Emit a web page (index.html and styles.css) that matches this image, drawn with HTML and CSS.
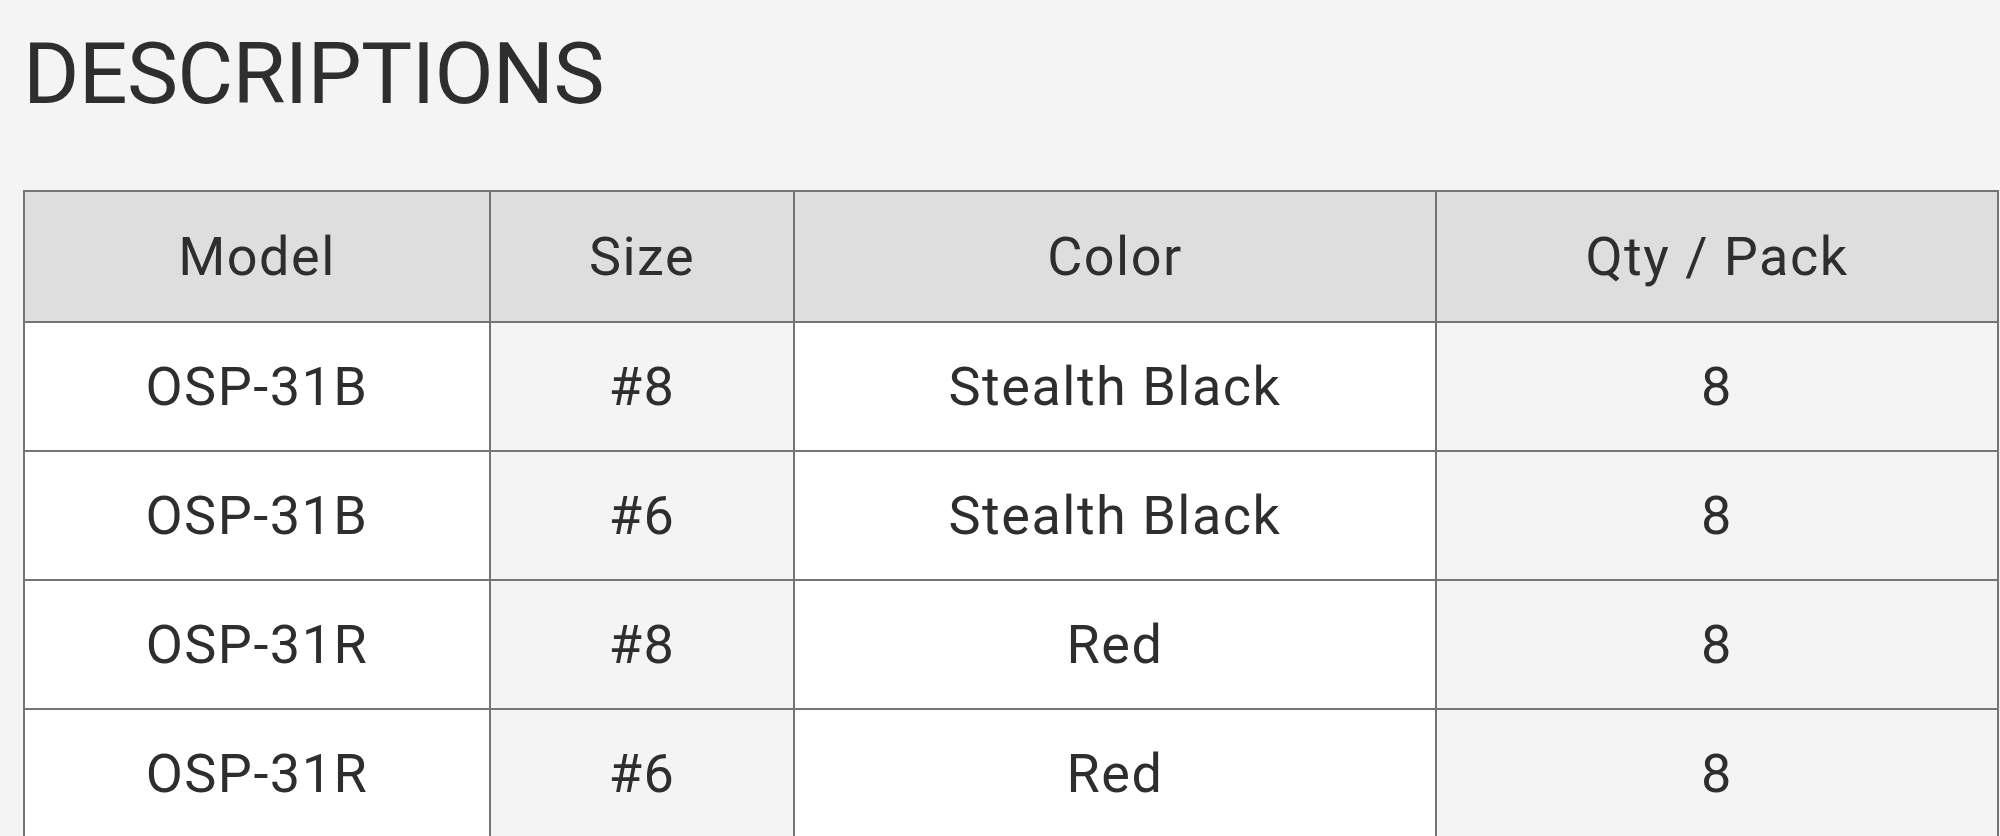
FILE: index.html
```html
<!DOCTYPE html>
<html>
<head>
<meta charset="utf-8">
<link rel="stylesheet" href="styles.css">
</head>
<body>
<div class="page">
  <h2 class="title">DESCRIPTIONS</h2>
  <table class="spec">
    <colgroup>
      <col class="c-model"><col class="c-size"><col class="c-color"><col class="c-qty">
    </colgroup>
    <thead>
      <tr><th>Model</th><th>Size</th><th>Color</th><th>Qty / Pack</th></tr>
    </thead>
    <tbody>
      <tr><td>OSP-31B</td><td>#8</td><td>Stealth Black</td><td>8</td></tr>
      <tr><td>OSP-31B</td><td>#6</td><td>Stealth Black</td><td>8</td></tr>
      <tr><td>OSP-31R</td><td>#8</td><td>Red</td><td>8</td></tr>
      <tr><td>OSP-31R</td><td>#6</td><td>Red</td><td>8</td></tr>
    </tbody>
  </table>
</div>
</body>
</html>
```
FILE: styles.css
```css
html, body {
  margin: 0;
  padding: 0;
  background: #f4f4f4;
  overflow: hidden;
}
.page {
  padding: 0 0 0 23px;
  font-family: Roboto, "Liberation Sans", sans-serif;
  color: #2e2e2e;
}
.title {
  margin: 0;
  padding-top: 24px;
  font-size: 86px;
  font-weight: 400;
  line-height: 100px;
  height: 166px;
  letter-spacing: -0.7px;
}
.spec {
  border-collapse: collapse;
  width: 1976px;
  table-layout: fixed;
}
.c-model { width: 466px; }
.c-size { width: 304px; }
.c-color { width: 642px; }
.c-qty { width: 562px; }
.spec th, .spec td {
  border: 2px solid #747474;
  text-align: center;
  font-size: 54px;
  font-weight: 400;
  letter-spacing: 1.5px;
  padding: 0;
}
.spec th {
  background: #dedede;
  height: 129px;
}
.spec td {
  height: 127px;
}
.spec td:nth-child(odd) { background: #ffffff; }
.spec td:nth-child(even) { background: #f4f4f4; }
```
